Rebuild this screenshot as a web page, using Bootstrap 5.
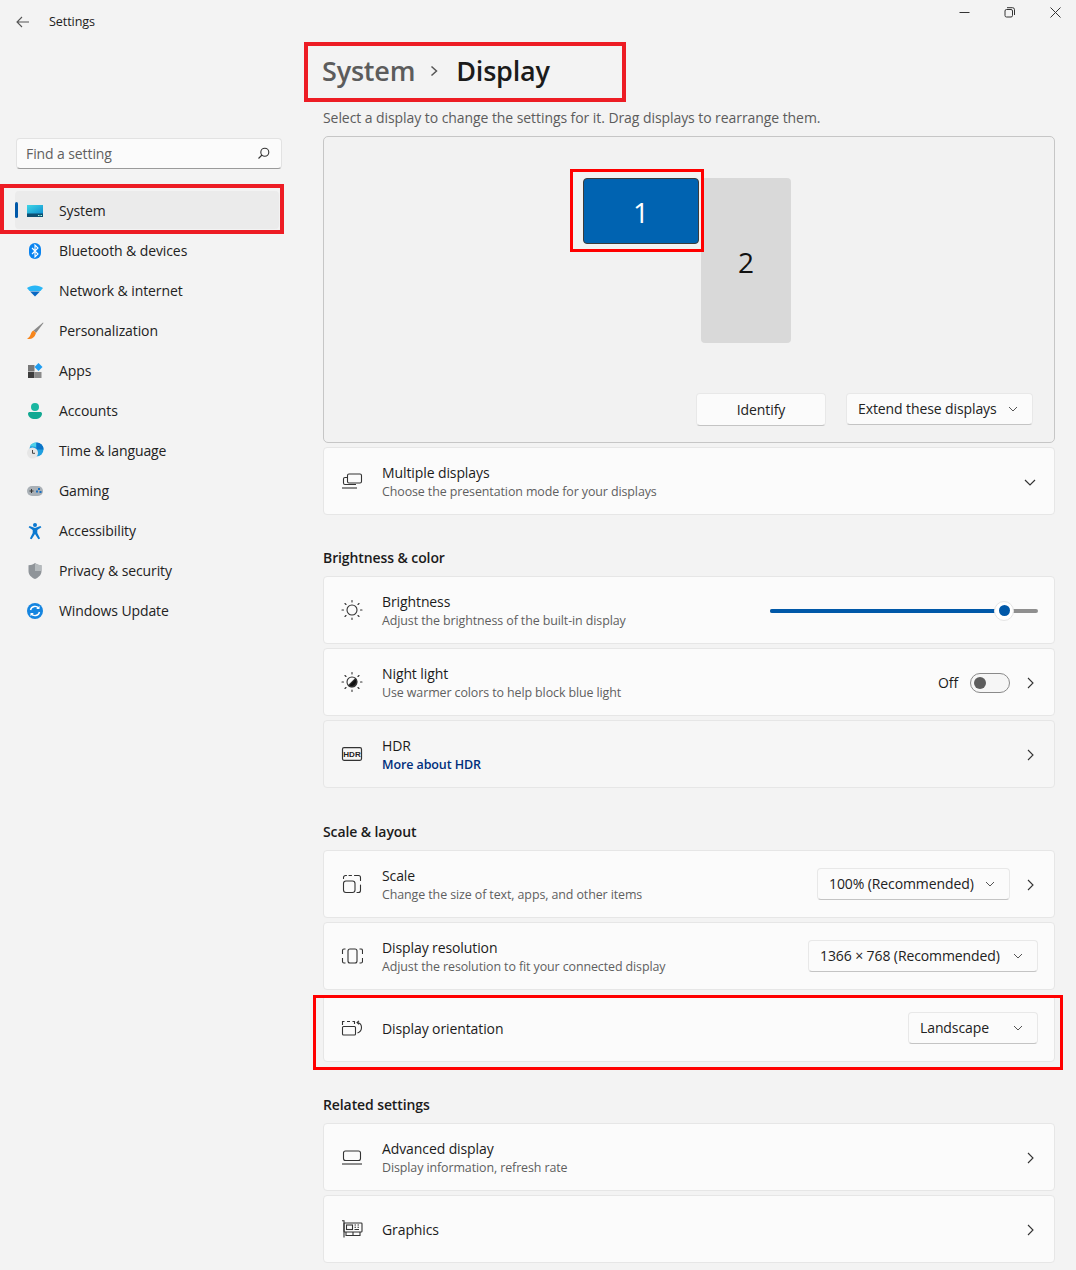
<!DOCTYPE html>
<html lang="en"><head><meta charset="utf-8"><title>Settings</title>
<link href="https://cdn.jsdelivr.net/npm/bootstrap@5.3.0/dist/css/bootstrap.min.css" rel="stylesheet">
<style>
html,body{height:1270px;overflow:hidden}
body{background:#f3f3f3;color:#1b1b1b;font-family:"Open Sans","Noto Sans",sans-serif;font-size:14px;line-height:20px;letter-spacing:-.1px}
svg{display:block;flex:none}
.app-shell{width:1076px;height:1270px}
.side-col{width:323px;flex:none}
.main-col{width:732px;flex:none}
.title-bar{height:42px;padding:2px 0 0 16px;font-size:12.6px;color:#222}
.title-bar .lbl{margin-left:19px}
.win-btns{position:absolute;top:0;right:-2px;height:24px}
.win-btns span{width:45.5px;display:flex;justify-content:center;align-items:center}
.search-box{margin:96px 0 0 16px;width:266px;height:31px;background:#fbfbfb;border:1px solid #e2e2e2;border-bottom-color:#9a9a9a;border-radius:4px;padding:0 11px 0 9px;color:#5f5f5f}
.side-nav{margin-top:22px}
.nav-row{height:38px;margin:0 0 2px 15px;width:264px;padding:1px 0 0 11px;gap:15px;border-radius:4px;color:#222}
.nav-row.sel{background:#ebebeb}
.sel-pill{position:absolute;left:0;top:11px;width:3px;height:16px;background:#0058a8;border-radius:2px}
.sel-wrap{position:relative}
.red-a{position:absolute;border:4px solid #ed1c24;pointer-events:none}
.red-b{position:absolute;border:3px solid #f00;pointer-events:none}
.nav-red{left:-15px;top:-7px;width:284px;height:50px}
.crumb{height:60px;margin:42px 0 0;padding-bottom:2px;font-size:27px;font-weight:600;line-height:36px;position:relative;letter-spacing:-.2px}
.crumb .up{color:#5c5c5c;margin-left:-1px}
.crumb .sep{margin:0 18px 0 15px}
.crumb-red{left:-19px;top:0;width:322px;height:60px}
.hint{margin-top:6px;color:#5c5c5c;height:20px;letter-spacing:-.07px}
.display-panel{margin-top:8px;height:307px;background:#f2f2f2;border:1px solid #c6c6c6;border-radius:5px;position:relative}
.mon{position:absolute;display:flex;align-items:center;justify-content:center;font-size:28px;border-radius:4px;letter-spacing:0;padding-top:2px}
.mon-one{left:259px;top:41px;width:116px;height:66px;background:#0063b1;border:1px solid #3b3b3b;color:#fff}
.mon-two{left:377px;top:41px;width:90px;height:165px;background:#d9d9d9;color:#111}
.one-red{left:246px;top:32px;width:134px;height:83px}
.win-btn{background:#fbfbfb;border:1px solid #e8e8e8;border-bottom-color:#c4c4c4;border-radius:4px;height:32px;padding:0 11px;color:#222}
.panel-btns{position:absolute;top:256px;right:21px;gap:20px}
.id-btn{width:130px;height:33px;justify-content:center}
.set-row{height:68px;background:#fbfbfb;border:1px solid #e6e6e6;border-radius:4px;padding:2px 16px 0 17px;margin-bottom:4px;position:relative}
.set-row.soft{background:#f6f6f6}
.row-ico{width:22px;margin:-2px 19px 0 0}
.row-t{line-height:20px}
.row-s{font-size:12.45px;line-height:18px;color:#5f5f5f}
.row-l{font-size:12.5px;line-height:18px;color:#002f7c;font-weight:600}
.sec-h{font-weight:600;margin:0;padding:0;height:20px;line-height:20px;font-size:14px}
.head-a{margin-top:33px;margin-bottom:8px}
.head-b{margin-top:34px;margin-bottom:8px}
.head-c{margin-top:33px;margin-bottom:8px}
.gap-strip{height:4px}
.orient-row{margin-top:5px;height:67px;padding-top:1px}
.trail{margin-left:auto;gap:13px}
.slider-track{width:268px;height:4px;background:#8f8f8f;border-radius:2px;position:relative;margin:-1px 0 0}
.slider-fill{height:4px;background:#0058a8;border-radius:2px}
.slider-knob{position:absolute;top:-8px;width:20px;height:20px;margin-left:-10px;background:#fff;border:1px solid #e5e5e5;border-radius:50%;display:flex;align-items:center;justify-content:center}
.slider-knob i{display:block;width:11px;height:11px;border-radius:50%;background:#0058a8}
.tgl{width:40px;height:20px;border:1px solid #8a8a8a;border-radius:10px;background:#f6f6f6;padding-left:3px;margin-left:-1px}
.tgl i{display:block;width:12px;height:12px;border-radius:50%;background:#5d5d5d}
.chev{margin-left:4px;margin-right:4px}
.chev-dn{margin-right:2px}
.orient-red{left:-11px;top:-1px;width:750px;height:75px}
.dd-a{width:193px}.dd-b{width:230px}.dd-c{width:130px}.dd-ext{width:187px}
.dd-a,.dd-b,.dd-c{margin-top:-2px}
.win-btn .push{margin-left:auto;margin-right:3px}
</style></head><body>
<div class="app-shell d-flex position-relative">
 <aside class="side-col">
  <div class="title-bar d-flex align-items-center">
   <svg width="14" height="12" viewBox="0 0 14 12" fill="none" stroke="#555" stroke-width="1.1"><path d="M13 6H1M6 1 1 6l5 5"/></svg>
   <span class="lbl">Settings</span>
  </div>
  <div class="search-box d-flex align-items-center justify-content-between">
   <span>Find a setting</span>
   <svg width="13" height="13" viewBox="0 0 13 13" fill="none" stroke="#333" stroke-width="1.1"><circle cx="7.800" cy="5.200" r="4"/><path d="M5 8 1.500 11.500"/></svg>
  </div>
  <nav class="side-nav">
   <div class="nav-row sel d-flex align-items-center sel-wrap"><span class="sel-pill"></span>
    <svg width="18" height="14" viewBox="0 0 18 14"><defs><linearGradient id="gs" x1="0" y1="0" x2="1" y2="1"><stop offset="0" stop-color="#3fd6e6"/><stop offset="1" stop-color="#0f8fd0"/></linearGradient></defs><rect x="1" y="1" width="16" height="9" fill="url(#gs)"/><rect x="1" y="9.500" width="16" height="3.500" fill="#0d4f72"/><rect x="12" y="11" width="1.500" height="1" fill="#9fd"/><rect x="14.500" y="11" width="1.500" height="1" fill="#9fd"/></svg>
    <span>System</span><span class="red-a nav-red"></span></div>
   <div class="nav-row d-flex align-items-center">
    <svg width="18" height="18" viewBox="0 0 18 18"><rect x="3" y="1" width="12" height="16" rx="6" fill="#0a84f0"/><path d="M6 6l6 6-3 3V3l3 3-6 6" fill="none" stroke="#fff" stroke-width="1.100"/></svg>
    <span>Bluetooth &amp; devices</span></div>
   <div class="nav-row d-flex align-items-center">
    <svg width="18" height="18" viewBox="0 0 18 18"><path d="M1 6C5 2.500 13 2.500 17 6L14.500 9H3.500Z" fill="#29b6f6"/><path d="M4 9.500h10L9 14.500Z" fill="#0867c2"/></svg>
    <span>Network &amp; internet</span></div>
   <div class="nav-row d-flex align-items-center">
    <svg width="18" height="18" viewBox="0 0 18 18"><path d="M17 .5 7.500 8.500 10 11 17.500 1Z" fill="#8a8a8a"/><path d="M7.500 8.500C5 9.500 5 12 4 14 3.300 15.300 2.200 15.800 1 17c3.500.5 7.500-.5 9-6Z" fill="#f7861c"/></svg>
    <span>Personalization</span></div>
   <div class="nav-row d-flex align-items-center">
    <svg width="18" height="18" viewBox="0 0 18 18"><rect x="2" y="3" width="6.500" height="6.500" fill="#777"/><rect x="2" y="10" width="6.500" height="6" fill="#3c3c3c"/><rect x="9" y="10" width="6.500" height="6" fill="#8a8a8a"/><path d="M12.500 1 16.500 5 12.500 9 8.500 5Z" fill="#1e9cf0"/></svg>
    <span>Apps</span></div>
   <div class="nav-row d-flex align-items-center">
    <svg width="18" height="18" viewBox="0 0 18 18" fill="#19b6a0"><circle cx="9" cy="5" r="4"/><path d="M2 11.500c0-1 1-1.500 2-1.500h10c1 0 2 .5 2 1.500C16 15 13 17 9 17s-7-2-7-5.500Z" fill="#12a892"/></svg>
    <span>Accounts</span></div>
   <div class="nav-row d-flex align-items-center">
    <svg width="18" height="18" viewBox="0 0 18 18"><circle cx="10.500" cy="7.500" r="7" fill="#1f9fe0"/><path d="M10.500.5a7 7 0 0 1 7 7h-7Z" fill="#0b74c8"/><path d="M4 4a7 7 0 0 1 6-3.500V5Z" fill="#4fd0e8"/><circle cx="6.500" cy="11" r="5.500" fill="#e6e6e6"/><path d="M6.500 8v3.300H9" fill="none" stroke="#444" stroke-width="1"/></svg>
    <span>Time &amp; language</span></div>
   <div class="nav-row d-flex align-items-center">
    <svg width="18" height="14" viewBox="0 0 18 14"><rect x="1" y="2" width="16" height="10" rx="5" fill="#a9b0b6"/><path d="M3.500 7h4M5.500 5v4" stroke="#333" stroke-width="1"/><rect x="12" y="4" width="2" height="2" fill="#1a6fc0"/><rect x="10" y="6.500" width="2" height="2" fill="#1a6fc0"/><rect x="13.500" y="7" width="2" height="2" fill="#1a6fc0"/></svg>
    <span>Gaming</span></div>
   <div class="nav-row d-flex align-items-center">
    <svg width="18" height="18" viewBox="0 0 18 18" fill="#0a78d0"><circle cx="9" cy="3" r="2"/><path d="M2.600 5.300 3.600 4 9 6l5.400-2 1 1.300L11.300 8v3l2.800 5.500-1.700.8L9 12l-3.400 5.300-1.700-.8L6.700 11V8Z"/></svg>
    <span>Accessibility</span></div>
   <div class="nav-row d-flex align-items-center">
    <svg width="18" height="18" viewBox="0 0 18 18"><path d="M9 1c2 1.600 4 2.200 6.500 2.300V9c0 4-3 6.500-6.500 8-3.500-1.500-6.500-4-6.500-8V3.300C5 3.200 7 2.600 9 1Z" fill="#8f9499"/><path d="M9 1c2 1.600 4 2.200 6.500 2.300V9H9Z" fill="#b5babd"/></svg>
    <span>Privacy &amp; security</span></div>
   <div class="nav-row d-flex align-items-center">
    <svg width="18" height="18" viewBox="0 0 18 18"><circle cx="9" cy="9" r="8" fill="#1585e0"/><path d="M4.500 8A4.700 4.700 0 0 1 12.800 6.200M13.500 10a4.700 4.700 0 0 1-8.300 1.800" fill="none" stroke="#fff" stroke-width="1.400"/><path d="M13.500 3.800v3.300h-3.300ZM4.500 14.200v-3.300h3.300Z" fill="#fff"/></svg>
    <span>Windows Update</span></div>
  </nav>
 </aside>
 <main class="main-col">
  <div class="crumb d-flex align-items-center">
   <span class="up">System</span>
   <svg class="sep" width="8" height="12" viewBox="0 0 8 12" fill="none" stroke="#555" stroke-width="1.500"><path d="m1.500 1.500 5 4.500-5 4.500"/></svg>
   <span>Display</span>
   <span class="red-a crumb-red"></span>
  </div>
  <div class="hint">Select a display to change the settings for it. Drag displays to rearrange them.</div>
  <section class="display-panel">
   <div class="mon mon-two">2</div>
   <div class="mon mon-one">1</div>
   <span class="red-b one-red"></span>
   <div class="panel-btns d-flex">
    <div class="win-btn id-btn d-flex align-items-center">Identify</div>
    <div class="win-btn dd-ext d-flex align-items-center"><span>Extend these displays</span><svg class="push" width="10" height="6" viewBox="0 0 10 6" fill="none" stroke="#555" stroke-width="1"><path d="m1 1 4 4 4-4"/></svg></div>
   </div>
  </section>
  <div class="gap-strip"></div>
  <div class="set-row d-flex align-items-center">
   <svg class="row-ico" width="22" height="20" viewBox="0 0 22 20" fill="none" stroke="#333" stroke-width="1.100"><rect x="6.500" y="3" width="14" height="9" rx="1.500"/><path d="M6.500 6.500H4A1.500 1.500 0 0 0 2.500 8v4A1.500 1.500 0 0 0 4 13.500h11"/><path d="M1 17h15"/></svg>
   <div><div class="row-t">Multiple displays</div><div class="row-s">Choose the presentation mode for your displays</div></div>
   <div class="trail d-flex align-items-center"><svg class="chev chev-dn" width="12" height="7" viewBox="0 0 12 7" fill="none" stroke="#333" stroke-width="1.200"><path d="m1 1 5 5 5-5"/></svg></div>
  </div>
  <h6 class="sec-h head-a">Brightness &amp; color</h6>
  <div class="set-row d-flex align-items-center">
   <svg class="row-ico" width="22" height="20" viewBox="0 0 22 20" fill="none" stroke="#333" stroke-width="1.100" stroke-linecap="round"><circle cx="11" cy="10" r="5"/><path d="M11 .5v1.500M11 18v1.500M1 10h1.500M19.500 10H21M4 3.500l1 1M17 15.500l1 1M18 3.500l-1 1M5 15.500l-1 1"/></svg>
   <div><div class="row-t">Brightness</div><div class="row-s">Adjust the brightness of the built-in display</div></div>
   <div class="trail d-flex align-items-center">
    <div class="slider-track"><div class="slider-fill" style="width:234px"></div><div class="slider-knob" style="left:234px"><i></i></div></div>
   </div>
  </div>
  <div class="set-row d-flex align-items-center">
   <svg class="row-ico" width="22" height="20" viewBox="0 0 22 20" fill="none" stroke="#333" stroke-width="1.100" stroke-linecap="round"><circle cx="11" cy="10" r="5"/><path d="M7.500 13.500A5 5 0 0 0 14.500 6.500Z" fill="#111"/><path d="M11 .5v1.500M11 18v1.500M1 10h1.500M19.500 10H21M4 3.500l1 1M17 15.500l1 1M18 3.500l-1 1M5 15.500l-1 1"/></svg>
   <div><div class="row-t">Night light</div><div class="row-s">Use warmer colors to help block blue light</div></div>
   <div class="trail d-flex align-items-center">
    <span>Off</span>
    <div class="tgl d-flex align-items-center"><i></i></div>
    <svg class="chev" width="7" height="12" viewBox="0 0 7 12" fill="none" stroke="#333" stroke-width="1.100"><path d="m1 1 5 5-5 5"/></svg>
   </div>
  </div>
  <div class="set-row soft d-flex align-items-center">
   <svg class="row-ico" width="22" height="14" viewBox="0 0 22 14" fill="none"><rect x="1.500" y=".7" width="19" height="12.600" rx="1.500" stroke="#333" stroke-width="1.200"/><text x="11" y="10" text-anchor="middle" font-size="8" font-weight="700" fill="#222" font-family="Liberation Sans" letter-spacing="0">HDR</text></svg>
   <div><div class="row-t">HDR</div><div class="row-l">More about HDR</div></div>
   <div class="trail d-flex align-items-center"><svg class="chev" width="7" height="12" viewBox="0 0 7 12" fill="none" stroke="#333" stroke-width="1.100"><path d="m1 1 5 5-5 5"/></svg></div>
  </div>
  <h6 class="sec-h head-b">Scale &amp; layout</h6>
  <div class="set-row d-flex align-items-center">
   <svg class="row-ico" width="22" height="20" viewBox="0 0 22 20" fill="none" stroke="#333" stroke-width="1.100" stroke-linecap="round"><rect x="2.500" y="7" width="11.500" height="11.500" rx="2.500"/><path d="M2.500 4.500v-1a2 2 0 0 1 2-2h1M8 1.500h2.500M13.500 1.500h4a2 2 0 0 1 2 2v3M19.500 11v5.500a2 2 0 0 1-2 2h-1.500"/></svg>
   <div><div class="row-t">Scale</div><div class="row-s">Change the size of text, apps, and other items</div></div>
   <div class="trail d-flex align-items-center">
    <div class="win-btn dd-a d-flex align-items-center"><span>100% (Recommended)</span><svg class="push" width="10" height="6" viewBox="0 0 10 6" fill="none" stroke="#555" stroke-width="1"><path d="m1 1 4 4 4-4"/></svg></div>
    <svg class="chev" width="7" height="12" viewBox="0 0 7 12" fill="none" stroke="#333" stroke-width="1.100"><path d="m1 1 5 5-5 5"/></svg>
   </div>
  </div>
  <div class="set-row d-flex align-items-center">
   <svg class="row-ico" width="22" height="18" viewBox="0 0 22 18" fill="none" stroke="#333" stroke-width="1.100"><rect x="7" y="2" width="9" height="14" rx="2"/><path d="M4.500 2H3A1.500 1.500 0 0 0 1.500 3.500V7M1.500 11v3.500A1.500 1.500 0 0 0 3 16h1.500M18.500 2H20a1.500 1.500 0 0 1 1.500 1.500V7M21.500 11v3.500A1.500 1.500 0 0 1 20 16h-1.500"/></svg>
   <div><div class="row-t">Display resolution</div><div class="row-s">Adjust the resolution to fit your connected display</div></div>
   <div class="trail d-flex align-items-center">
    <div class="win-btn dd-b d-flex align-items-center"><span>1366 × 768 (Recommended)</span><svg class="push" width="10" height="6" viewBox="0 0 10 6" fill="none" stroke="#555" stroke-width="1"><path d="m1 1 4 4 4-4"/></svg></div>
   </div>
  </div>
  <div class="set-row orient-row d-flex align-items-center">
   <svg class="row-ico" width="22" height="16" viewBox="0 0 22 16" fill="none" stroke="#333" stroke-width="1.100"><path d="M1.500 5V1.500h2M6 1.500h3M11.500 1.500h2V4"/><rect x="1.500" y="6.500" width="13" height="8.500" rx="1"/><path d="M16.500 2.500c2.500.5 4 2.500 4 5s-1.500 4.500-4 5.500M18 .8l-2 1.800 2 1.800"/></svg>
   <div><div class="row-t">Display orientation</div></div>
   <div class="trail d-flex align-items-center">
    <div class="win-btn dd-c d-flex align-items-center"><span>Landscape</span><svg class="push" width="10" height="6" viewBox="0 0 10 6" fill="none" stroke="#555" stroke-width="1"><path d="m1 1 4 4 4-4"/></svg></div>
   </div>
   <span class="red-b orient-red"></span>
  </div>
  <h6 class="sec-h head-c">Related settings</h6>
  <div class="set-row d-flex align-items-center">
   <svg class="row-ico" width="22" height="16" viewBox="0 0 22 16" fill="none" stroke="#333" stroke-width="1.100"><rect x="2.500" y="2" width="17" height="9.500" rx="2"/><path d="M1 15h20"/></svg>
   <div><div class="row-t">Advanced display</div><div class="row-s">Display information, refresh rate</div></div>
   <div class="trail d-flex align-items-center"><svg class="chev" width="7" height="12" viewBox="0 0 7 12" fill="none" stroke="#333" stroke-width="1.100"><path d="m1 1 5 5-5 5"/></svg></div>
  </div>
  <div class="set-row d-flex align-items-center">
   <svg class="row-ico" width="22" height="18" viewBox="0 0 22 18" fill="none" stroke="#333" stroke-width="1.100"><path d="M1 .8H3V17.500"/><rect x="3" y="3" width="18" height="9" rx=".8"/><rect x="5.500" y="5" width="6" height="4.500"/><path d="M13.500 5H15M16.500 5H18M13.500 7.300H15M16.500 7.300H18M13.500 9.500H18M5 12v3.500h7V12M12 12v3.500h7V12"/></svg>
   <div><div class="row-t">Graphics</div></div>
   <div class="trail d-flex align-items-center"><svg class="chev" width="7" height="12" viewBox="0 0 7 12" fill="none" stroke="#333" stroke-width="1.100"><path d="m1 1 5 5-5 5"/></svg></div>
  </div>
 </main>
 <div class="win-btns d-flex">
  <span><svg width="11" height="11" viewBox="0 0 11 11" stroke="#333" stroke-width="1"><path d="M.5 5.500h10"/></svg></span>
  <span><svg width="11" height="11" viewBox="0 0 11 11" fill="none" stroke="#333" stroke-width="1"><rect x="1" y="2.500" width="7.500" height="7.500" rx="1.500"/><path d="M3 .7h5.500a2 2 0 0 1 2 2V8"/></svg></span>
  <span><svg width="11" height="11" viewBox="0 0 11 11" stroke="#333" stroke-width="1"><path d="m.5.500 10 10M10.500.500l-10 10"/></svg></span>
 </div>
</div>
</body></html>
